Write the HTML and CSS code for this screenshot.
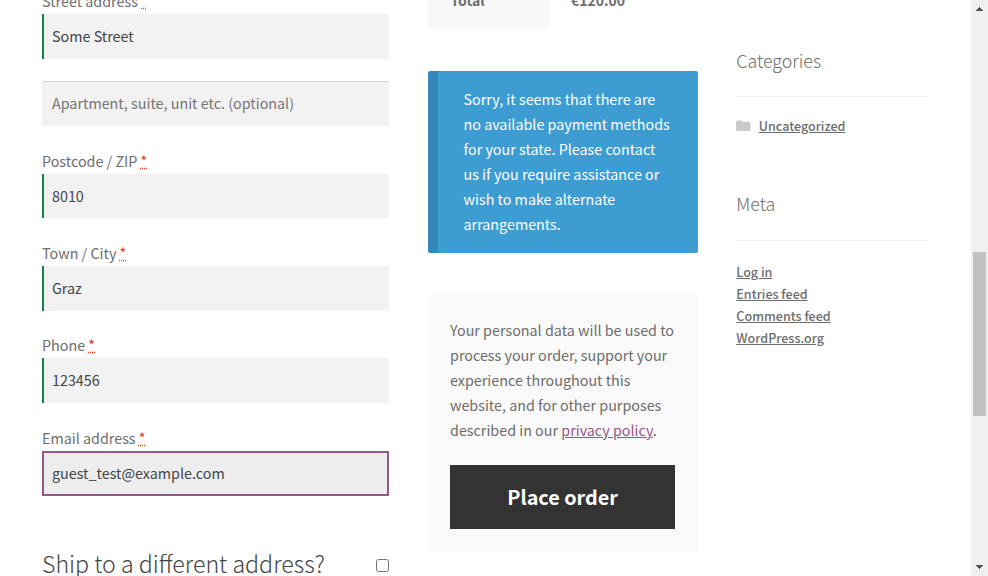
FILE: index.html
```html
<!DOCTYPE html>
<html lang="en">
<head>
<meta charset="utf-8">
<title>Checkout</title>
<link rel="stylesheet" href="styles.css">
</head>
<body>
<div class="page">
  <form class="billing">
    <div class="field">
      <label for="street">Street address <abbr>*</abbr></label>
      <input class="input valid" id="street" type="text" value="Some Street">
    </div>
    <div class="field">
      <input class="input plain" type="text" placeholder="Apartment, suite, unit etc. (optional)">
    </div>
    <div class="field short">
      <label for="zip">Postcode / ZIP <abbr>*</abbr></label>
      <input class="input valid" id="zip" type="text" value="8010">
    </div>
    <div class="field">
      <label for="city">Town / City <abbr>*</abbr></label>
      <input class="input valid" id="city" type="text" value="Graz">
    </div>
    <div class="field">
      <label for="phone">Phone <abbr>*</abbr></label>
      <input class="input valid" id="phone" type="text" value="123456">
    </div>
    <div class="field">
      <label for="email">Email address <abbr>*</abbr></label>
      <input class="input focused" id="email" type="text" value="guest_test@example.com">
    </div>
    <h3 class="ship"><span>Ship to a different address?</span><i class="checkbox"></i></h3>
  </form>
  <section class="order">
    <div class="total"><div class="total-name">Total</div><div class="total-value">€120.00</div></div>
    <div class="notice">Sorry, it seems that there are<br>no available payment methods<br>for your state. Please contact<br>us if you require assistance or<br>wish to make alternate<br>arrangements.</div>
    <div class="place">
      <p>Your personal data will be used to<br>process your order, support your<br>experience throughout this<br>website, and for other purposes<br>described in our <a href="#">privacy policy</a>.</p>
      <button type="button">Place order</button>
    </div>
  </section>
  <aside class="sidebar">
    <h2>Categories</h2>
    <ul class="categories">
      <li><svg width="15" height="12" viewBox="0 0 15 12"><path d="M2 0.5H5Q6.3 .5 6.3 1.7H12.5Q14.5 1.7 14.5 3.7V9Q14.5 11 12.5 11H2Q0 11 0 9V2.5Q0 .5 2 .5Z" fill="#cbcbcb"/></svg><a href="#">Uncategorized</a></li>
    </ul>
    <h2>Meta</h2>
    <ul>
      <li><a href="#">Log in</a></li>
      <li><a href="#">Entries feed</a></li>
      <li><a href="#">Comments feed</a></li>
      <li><a href="#">WordPress.org</a></li>
    </ul>
  </aside>
  <div class="scrollbar">
    <svg width="17" height="17" viewBox="0 0 17 17" shape-rendering="crispEdges"><path d="M8 7h1v1h1v1h1v1h1v1H5v-1h1V9h1V8h1z" fill="#505050"/></svg>
    <div class="thumb"></div>
    <svg class="down" width="17" height="17" viewBox="0 0 17 17" shape-rendering="crispEdges"><path d="M5 6h7v1h-1v1h-1v1h-1v1H8V9H7V8H6V7H5z" fill="#505050"/></svg>
  </div>
</div>
</body>
</html>
```
FILE: styles.css
```css
* { box-sizing: border-box; }
body {
  margin: 0;
  height: 576px;
  overflow: hidden;
  background: #fff;
  color: #6d6d6d;
  font: 14.33px/25px "Noto Sans CJK SC", "Noto Sans", sans-serif;
}
.page {
  display: grid;
  grid-template-columns: 347px 270px 192px 17px;
  grid-template-rows: 576px;
  column-gap: 39px;
  padding-left: 42px;
  height: 576px;
  overflow: hidden;
}
.billing { margin-top: -11px; }
.field { margin-bottom: 22px; }
.field:nth-child(2), .field:nth-child(3), .field:nth-child(5) { margin-bottom: 23px; }
label { display: block; height: 25px; line-height: 23px; white-space: nowrap; }
abbr { color: #e2401c; text-decoration: underline dotted #e2401c; }
.input {
  display: block;
  width: 347px;
  height: 45px;
  margin: 0;
  padding: 0 10px 2px;
  border: 0;
  outline: 0;
  border-radius: 0;
  background: #f2f2f2;
  color: #43454b;
  font: inherit;
}
.short .input { height: 44px; }
.valid { border-left: 2px solid #0f834d; padding-left: 8px; }
.plain { border-top: 1px solid #d8d8d8; padding-bottom: 3px; }
.plain::placeholder { color: #757575; opacity: 1; }
.focused { border: 2px solid #96588a; padding: 0 8px 2px; background: #ededed; }
.ship {
  display: flex;
  justify-content: space-between;
  align-items: center;
  margin: 48px 0 0;
  height: 38px;
  color: #444;
  font-size: 23.2px;
  font-weight: 300;
  white-space: nowrap;
}
.checkbox { width: 13px; height: 13px; margin-top: 4px; border: 1px solid #767676; border-radius: 2.5px; background: #fff; }
.total { display: flex; height: 29px; font-size: 14px; font-weight: 600; }
.total-name { width: 121px; padding-left: 22.5px; background: #f8f8f8; }
.total-value { padding-left: 22px; }
.total > div { line-height: 0; }
.notice {
  height: 182px;
  margin-top: 42px;
  padding: 15px 0 0 25.5px;
  border-left: 10px solid #3487b8;
  border-radius: 2px;
  background: #3d9cd2;
  color: #fff;
  white-space: nowrap;
}
.place { height: 257px; margin-top: 42px; padding: 22px 23px 0 22px; background: #fafafa; white-space: nowrap; }
.place p { margin: 0 0 23px; }
.place a { color: #96588a; }
button {
  display: block;
  width: 225px;
  height: 64px;
  padding: 0 0 2px;
  border: 0;
  background: #333;
  color: #fff;
  font: 700 19.8px "Noto Sans CJK SC", sans-serif;
}
.sidebar { padding-top: 41px; margin-left: -.7px; }
h2 {
  height: 56px;
  margin: 0 0 18px;
  border-bottom: 1px solid #f0f0f0;
  font-size: 17.8px;
  line-height: 38px;
  font-weight: 300;
}
ul { margin: 0; padding: 0; list-style: none; font-size: 12.55px; font-weight: 500; line-height: 22px; }
.categories { height: 69px; }
.categories + h2 { height: 57px; margin-bottom: 20px; }
li { display: flex; align-items: center; height: 22px; }
li svg { margin-right: 7.5px; }
ul a { color: #6d6d6d; }
.scrollbar { display: flex; flex-direction: column; width: 17px; margin-left: 3px; background: #f0f0f0; }
.thumb { width: 13px; height: 164px; margin: 235px 0 0 2px; background: #c1c1c1; }
.down { margin-top: auto; }
```
